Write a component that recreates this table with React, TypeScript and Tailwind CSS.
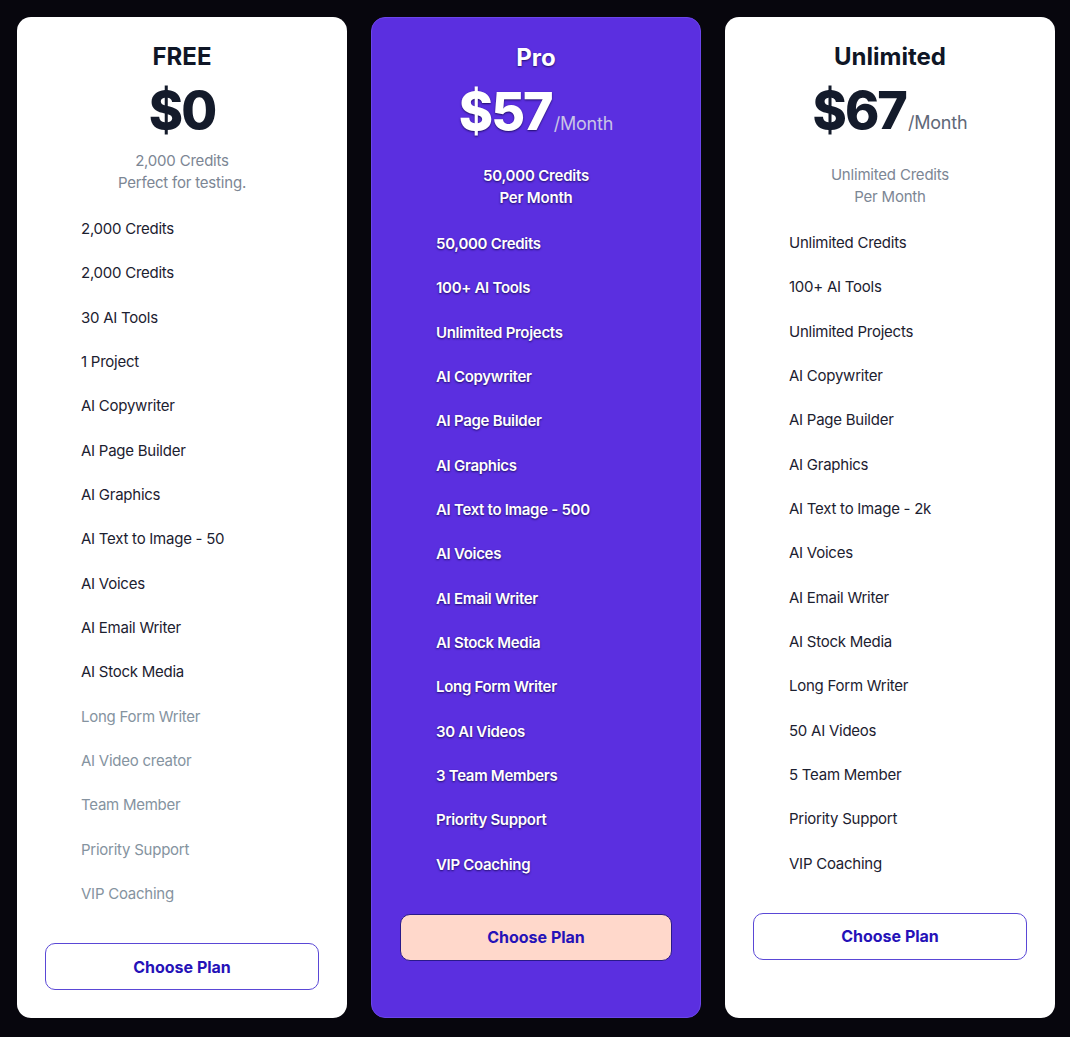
import React from "react";

type Feature = { label: string; muted?: boolean };

const freeFeatures: Feature[] = [
  { label: "2,000 Credits" },
  { label: "2,000 Credits" },
  { label: "30 AI Tools" },
  { label: "1 Project" },
  { label: "AI Copywriter" },
  { label: "AI Page Builder" },
  { label: "AI Graphics" },
  { label: "AI Text to Image - 50" },
  { label: "AI Voices" },
  { label: "AI Email Writer" },
  { label: "AI Stock Media" },
  { label: "Long Form Writer", muted: true },
  { label: "AI Video creator", muted: true },
  { label: "Team Member", muted: true },
  { label: "Priority Support", muted: true },
  { label: "VIP Coaching", muted: true },
];

const proFeatures = [
  "50,000 Credits",
  "100+ AI Tools",
  "Unlimited Projects",
  "AI Copywriter",
  "AI Page Builder",
  "AI Graphics",
  "AI Text to Image - 500",
  "AI Voices",
  "AI Email Writer",
  "AI Stock Media",
  "Long Form Writer",
  "30 AI Videos",
  "3 Team Members",
  "Priority Support",
  "VIP Coaching",
];

const unlimitedFeatures = [
  "Unlimited Credits",
  "100+ AI Tools",
  "Unlimited Projects",
  "AI Copywriter",
  "AI Page Builder",
  "AI Graphics",
  "AI Text to Image - 2k",
  "AI Voices",
  "AI Email Writer",
  "AI Stock Media",
  "Long Form Writer",
  "50 AI Videos",
  "5 Team Member",
  "Priority Support",
  "VIP Coaching",
];

const shadow = "[text-shadow:0_1px_2px_rgba(25,10,90,0.9)]";

export default function App() {
  return (
    <div
      className="min-h-[1037px] w-[1070px] bg-[#07060d] pl-[17px] pr-[15px] pt-[17px] pb-[19px]"
      style={{ fontFamily: "Inter, 'Noto Sans', sans-serif" }}
    >
      <div className="grid grid-cols-3 gap-6 items-stretch">
        {/* FREE */}
        <div className="flex flex-col rounded-[14px] bg-white px-7 pt-6 pb-7">
          <div className="text-center text-[24px] leading-8 font-bold text-[#0f1626]">FREE</div>
          <div className="mt-[12px] text-center text-[52px] leading-[52px] font-extrabold tracking-[-2px] text-[#141b2b]">
            $0
          </div>
          <div className="mt-[13px] text-center text-[15px] leading-[22px] tracking-[-0.2px] text-[#7c8694]">
            <div>2,000 Credits</div>
            <div>Perfect for testing.</div>
          </div>
          <ul className="mt-[13px] pl-9">
            {freeFeatures.map((f, i) => (
              <li
                key={i}
                className={`flex h-[44.33px] items-center text-[15px] tracking-[-0.25px] ${
                  f.muted ? "text-[#8593a0]" : "text-[#1c2130]"
                }`}
              >
                {f.label}
              </li>
            ))}
          </ul>
          <button className="mt-[27px] h-[47px] w-full rounded-[10px] border border-[#5a48d6] bg-white text-[16px] font-bold text-[#2512b8]">
            Choose Plan
          </button>
        </div>

        {/* PRO */}
        <div className="flex flex-col rounded-[14px] border border-[#6b45ea] bg-[#5b2fe0] px-7 pt-6 pb-7">
          <div className={`text-center text-[24px] leading-8 font-bold text-white ${shadow}`}>Pro</div>
          <div className="mt-[12px] flex items-baseline justify-center">
            <span className={`text-[52px] leading-[52px] font-extrabold tracking-[-2px] text-white ${shadow}`}>$57</span>
            <span className="ml-[2px] text-[18px] tracking-[-0.2px] text-[#c9c4e6]">/Month</span>
          </div>
          <div className={`mt-[27px] text-center text-[15px] leading-[22px] tracking-[-0.2px] font-semibold text-white ${shadow}`}>
            <div>50,000 Credits</div>
            <div>Per Month</div>
          </div>
          <ul className="mt-[13px] pl-9">
            {proFeatures.map((f, i) => (
              <li
                key={i}
                className={`flex h-[44.33px] items-center text-[15px] tracking-[-0.3px] font-semibold text-white ${shadow}`}
              >
                {f}
              </li>
            ))}
          </ul>
          <button className="mt-[27px] h-[47px] w-full rounded-[10px] border border-[#2a1a8a] bg-[#ffd8cb] text-[16px] font-bold text-[#2512b8]">
            Choose Plan
          </button>
        </div>

        {/* UNLIMITED */}
        <div className="flex flex-col rounded-[14px] bg-white px-7 pt-6 pb-7">
          <div className="text-center text-[24px] leading-8 font-bold text-[#0f1626]">Unlimited</div>
          <div className="mt-[12px] flex items-baseline justify-center">
            <span className="text-[52px] leading-[52px] font-extrabold tracking-[-2px] text-[#141b2b]">$67</span>
            <span className="ml-[2px] text-[18px] tracking-[-0.2px] text-[#5f6878]">/Month</span>
          </div>
          <div className="mt-[27px] text-center text-[15px] leading-[22px] tracking-[-0.2px] text-[#7c8694]">
            <div>Unlimited Credits</div>
            <div>Per Month</div>
          </div>
          <ul className="mt-[13px] pl-9">
            {unlimitedFeatures.map((f, i) => (
              <li key={i} className="flex h-[44.33px] items-center text-[15px] tracking-[-0.25px] text-[#1c2130]">
                {f}
              </li>
            ))}
          </ul>
          <button className="mt-[27px] h-[47px] w-full rounded-[10px] border border-[#5a48d6] bg-white text-[16px] font-bold text-[#2512b8]">
            Choose Plan
          </button>
        </div>
      </div>
    </div>
  );
}
